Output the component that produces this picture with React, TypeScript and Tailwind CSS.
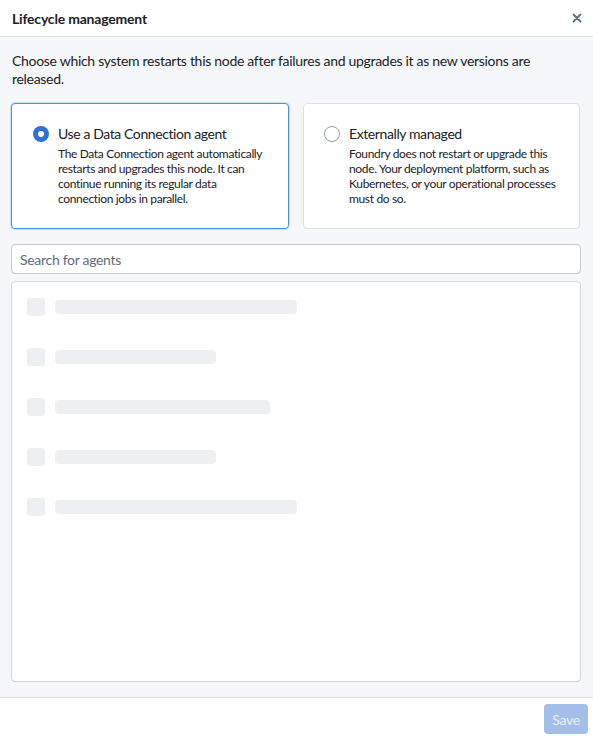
const rows = [242, 161, 215, 161, 242];

const Radio = ({ checked }: { checked: boolean }) =>
  checked ? (
    <span className="mt-[1px] flex h-4 w-4 shrink-0 items-center justify-center rounded-full bg-[#2d72d2]">
      <span className="h-[6px] w-[6px] rounded-full bg-white" />
    </span>
  ) : (
    <span className="mt-[1px] h-4 w-4 shrink-0 rounded-full border border-[#8f99a8] bg-white" />
  );

export default function App() {
  return (
    <div className="flex h-[740px] w-[593px] flex-col bg-white font-['Lato','Noto_Sans',sans-serif] tracking-[-0.3px] text-[#1c2127]">
      <header className="flex h-[37px] shrink-0 items-center justify-between border-b border-[#dcdfe3] pl-3 pr-[11px]">
        <h1 className="text-[14px] font-bold tracking-[-0.2px]">Lifecycle management</h1>
        <svg width="10" height="10" viewBox="0 0 10 10" className="text-[#5f6b7c]">
          <path d="M1.5 1.5l7 7M8.5 1.5l-7 7" stroke="currentColor" strokeWidth="1.8" strokeLinecap="round" />
        </svg>
      </header>

      <main className="flex min-h-0 flex-1 flex-col border-b border-[#dcdfe3] bg-[#f6f7f9] pb-[15px] pl-3 pr-[13px] pt-[15px]">
        <p className="text-[14px] leading-[18px] text-[#1c2127]">
          Choose which system restarts this node after failures and upgrades it as new versions are released.
        </p>

        <div className="mt-[15px] grid grid-cols-2 gap-[14px]">
          <div className="-ml-[1px] flex h-[126px] gap-[9px] rounded-[4px] border border-[#4c90f0] bg-white pl-[21px] pr-4 pt-[21px] shadow-[0_0_0_1px_rgba(76,144,240,0.25)]">
            <Radio checked />
            <div>
              <div className="text-[14px] leading-[18px] tracking-[-0.4px]">Use a Data Connection agent</div>
              <p className="mt-[3px] text-[12px] leading-[15px] tracking-[-0.35px]">
                The Data Connection agent automatically restarts and upgrades this node. It can continue running its regular data connection jobs in parallel.
              </p>
            </div>
          </div>
          <div className="flex h-[126px] gap-[9px] rounded-[4px] border border-[#dcdfe3] bg-white pl-[20px] pr-4 pt-[21px]">
            <Radio checked={false} />
            <div>
              <div className="text-[14px] leading-[18px] tracking-[-0.4px]">Externally managed</div>
              <p className="mt-[3px] text-[12px] leading-[15px] tracking-[-0.35px]">
                Foundry does not restart or upgrade this node. Your deployment platform, such as Kubernetes, or your operational processes must do so.
              </p>
            </div>
          </div>
        </div>

        <input
          placeholder="Search for agents"
          className="-ml-[1px] mt-[15px] h-[30px] w-[570px] rounded-[4px] border border-[#c5cbd3] bg-white px-2 text-[14px] tracking-[-0.3px] outline-none placeholder:text-[#5f6b7c]"
        />

        <div className="-ml-[1px] mt-[7px] flex w-[570px] flex-1 flex-col gap-8 rounded-[4px] border border-[#d3d8de] bg-white pl-[15px] pt-[16px]">
          {rows.map((w, i) => (
            <div key={i} className="flex h-[18px] items-center gap-[10px]">
              <span className="h-[18px] w-[18px] rounded-[3px] bg-[#eff0f2]" />
              <span className="h-[14px] rounded-[4px] bg-[#eff0f2]" style={{ width: w }} />
            </div>
          ))}
        </div>
      </main>

      <footer className="flex h-[42px] shrink-0 items-center justify-end pr-[5px]">
        <button className="h-[30px] w-[44px] rounded-[4px] bg-[#a3bee9] text-[14px] text-[#e8eef9]">Save</button>
      </footer>
    </div>
  );
}
